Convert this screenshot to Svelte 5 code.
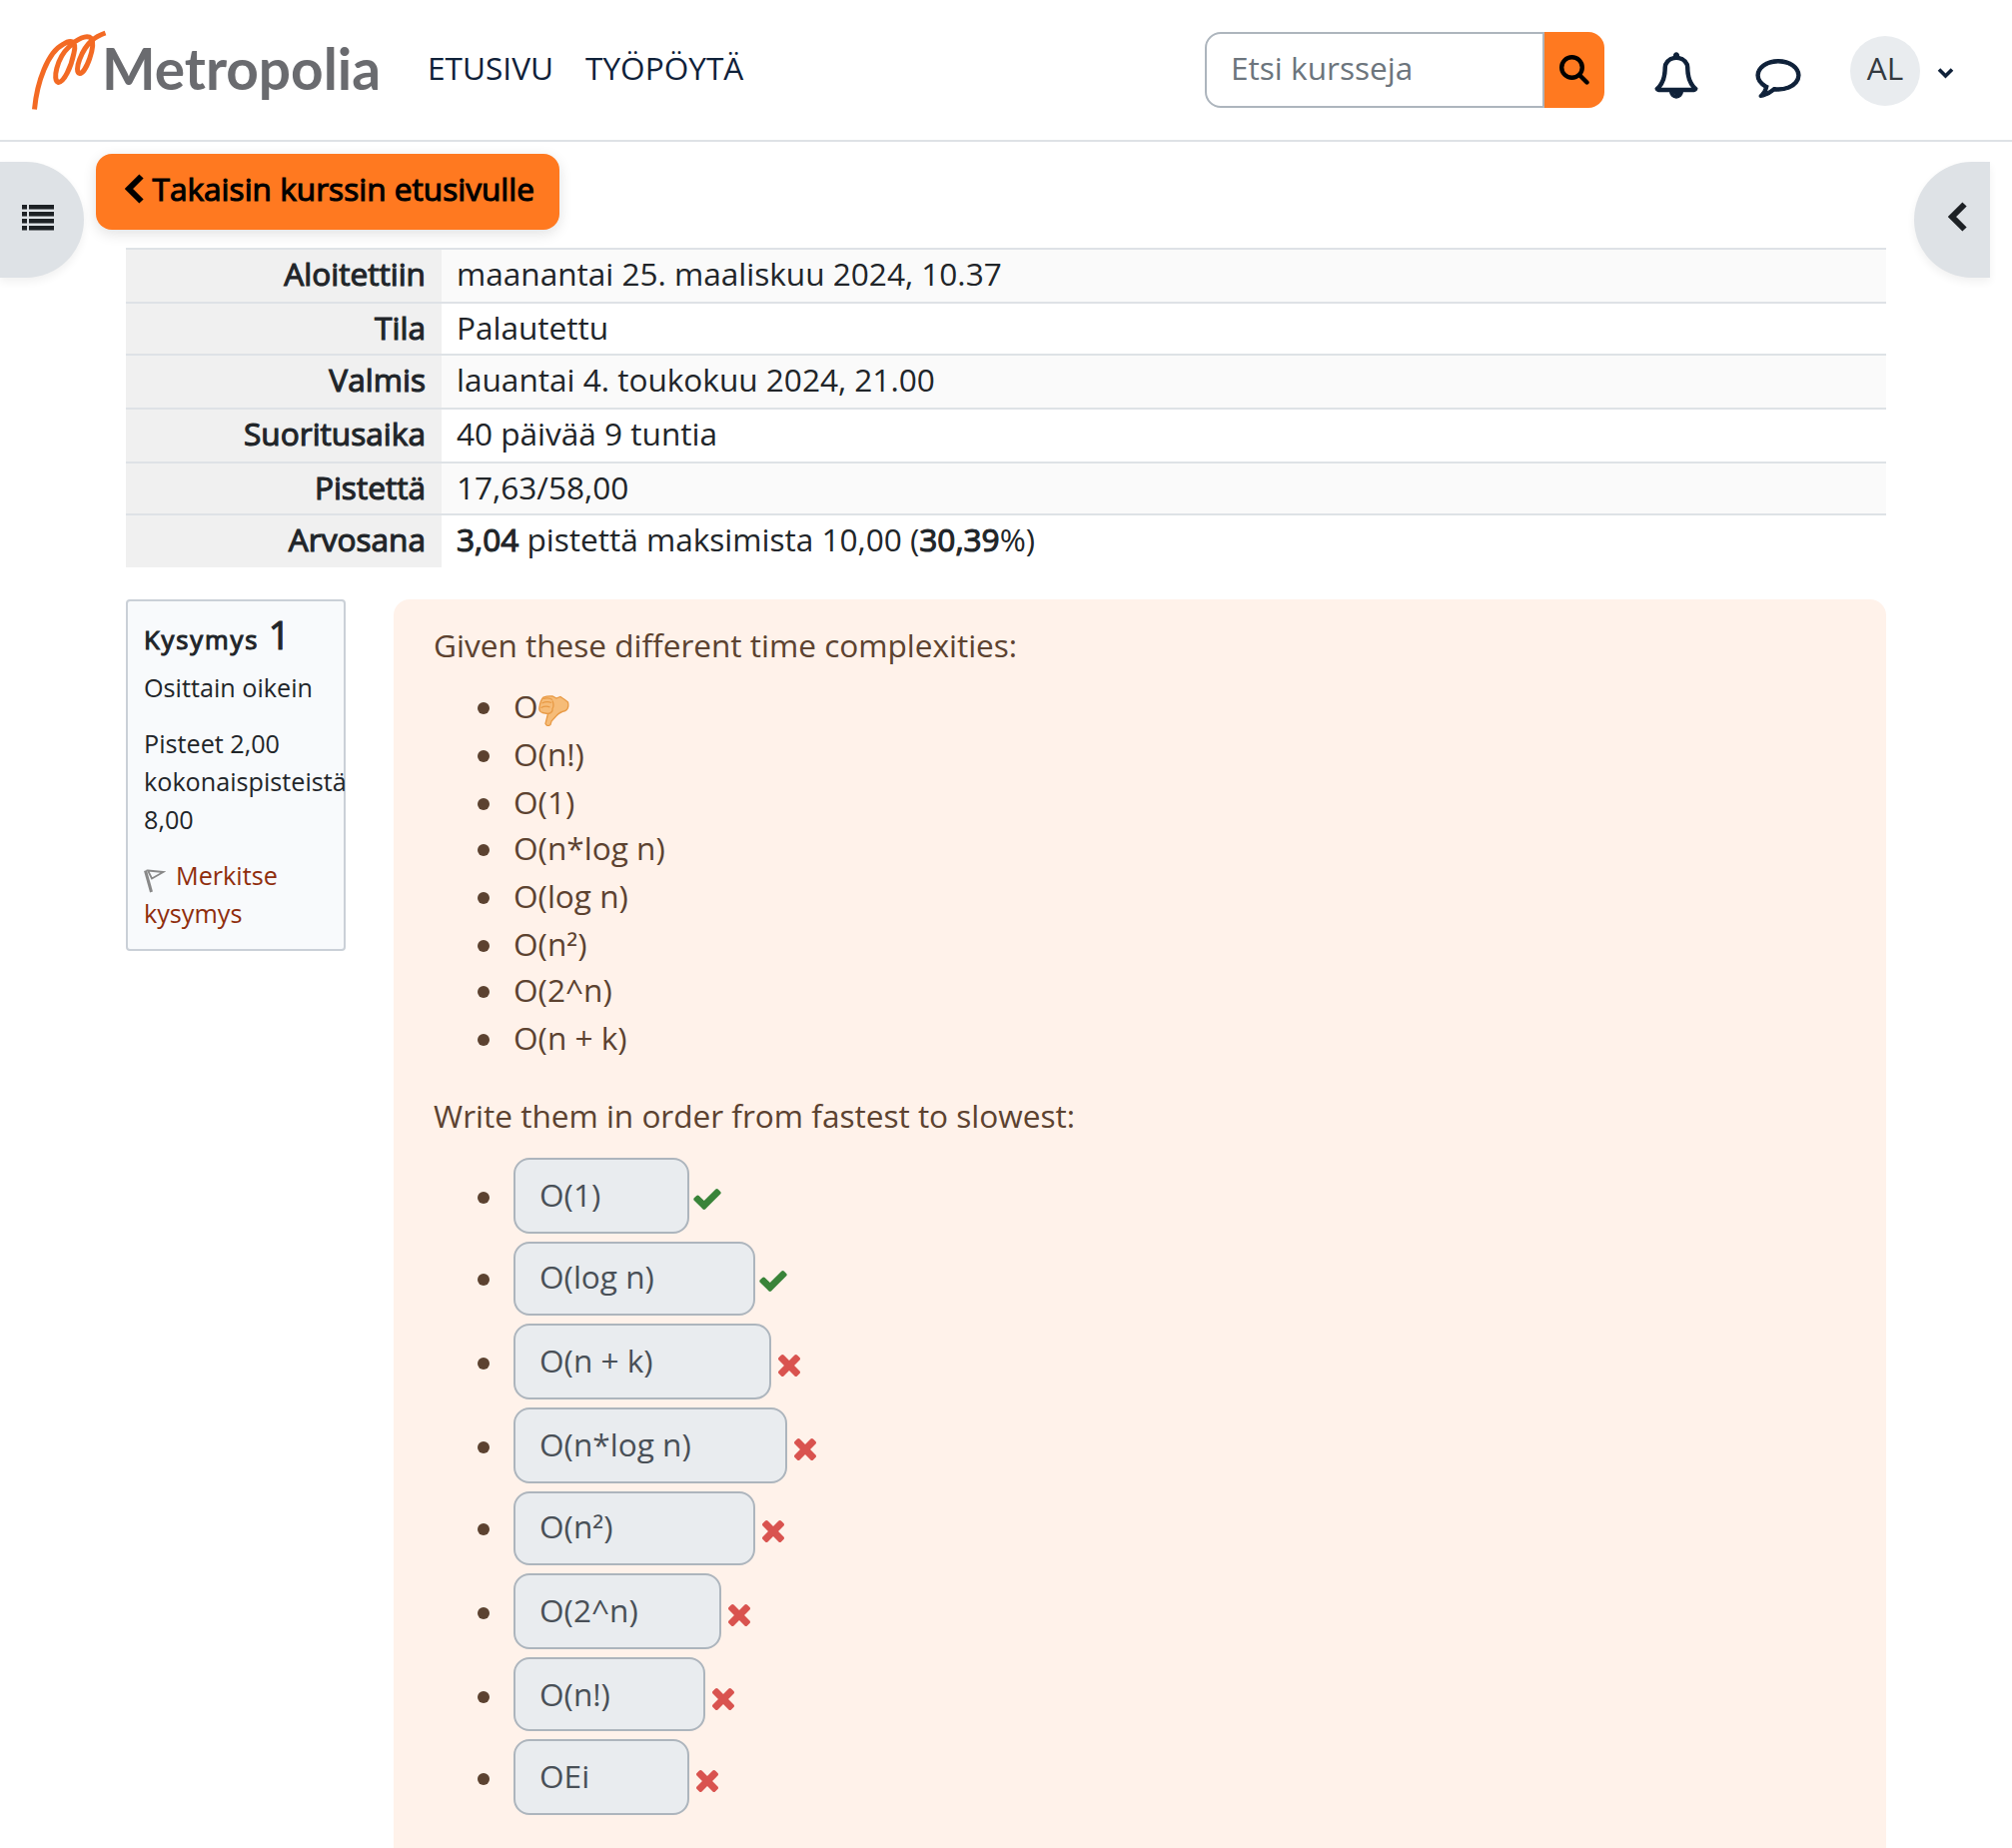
<script>
  const summary = [
    ['Aloitettiin', 'maanantai 25. maaliskuu 2024, 10.37'],
    ['Tila', 'Palautettu'],
    ['Valmis', 'lauantai 4. toukokuu 2024, 21.00'],
    ['Suoritusaika', '40 päivää 9 tuntia'],
    ['Pistettä', '17,63/58,00'],
  ];
  const options = ['O(n!)', 'O(1)', 'O(n*log n)', 'O(log n)', 'O(n²)', 'O(2^n)', 'O(n + k)'];
  const answers = [
    { value: 'O(1)', width: 176, ok: true },
    { value: 'O(log n)', width: 242, ok: true },
    { value: 'O(n + k)', width: 258, ok: false },
    { value: 'O(n*log n)', width: 274, ok: false },
    { value: 'O(n²)', width: 242, ok: false },
    { value: 'O(2^n)', width: 208, ok: false },
    { value: 'O(n!)', width: 192, ok: false },
    { value: 'OEi', width: 176, ok: false },
  ];
</script>

{#snippet formula(text)}<span>{#each text.split(/(²)/) as part}{#if part === '²'}<span class="square">²</span>{:else}{part}{/if}{/each}</span>{/snippet}

<div class="page">
  <header>
    <svg class="logo" width="360" height="100" viewBox="0 0 360 100" aria-label="Metropolia">
      <path d="M14.500 89.500C17 62 28 32 43 24.500C51 19 57 21 54 33C51 48 44 62 38.500 62.500C32 61 37 38 49 27C57 19 67 14 71.500 18.500C76 26 66 53 60 53.500C53 52 62 29 72 20.500Q77 16 85.500 13" />
      <text x="82" y="70" textLength="279" lengthAdjust="spacingAndGlyphs">Metropolia</text>
    </svg>
    <nav><a href="#top">ETUSIVU</a><a href="#top">TYÖPÖYTÄ</a></nav>
    <div class="search">
      <input placeholder="Etsi kursseja" />
      <button aria-label="Etsi">
        <svg width="30" height="30" viewBox="0 0 30 30"><circle cx="12.500" cy="12.500" r="10.300" /><path d="M20 20l7.500 7.500" /></svg>
      </button>
    </div>
    <svg class="bell" width="42" height="45" viewBox="0 0 1664 1792"><path d="M848 1696q0-16-16-16-59 0-101.500-42.500T688 1536q0-16-16-16t-16 16q0 73 51.500 124.500T832 1712q16 0 16-16zM182 1408h1300q-266-300-266-832 0-51-24-105t-69-103-121.500-80.500T832 256t-169.500 31.500T541 368t-69 103-24 105q0 532-266 832zm1482 0q0 52-38 90t-90 38h-448q0 106-75 181t-181 75-181-75-75-181H128q-52 0-90-38t-38-90q50-42 91-88t85-119.500 74.500-158.500 50-206T320 576q0-152 117-282.500T744 135q-8-19-8-39 0-40 28-68t68-28 68 28 28 68q0 20-8 39 190 28 307 158.500T1344 576q0 139 19.500 260t50 206 74.500 158.500 85 119.500 91 88z" /></svg>
    <svg class="comment" width="44" height="39" viewBox="0 0 1792 1536"><path d="M896 128q-204 0-381.500 69.500T232 385 128 640q0 112 71.500 213.500T401 1029l87 50-27 96q-24 91-70 172 152-63 275-171l43-38 57 6q69 8 130 8 204 0 381.500-69.500T1560 895t104-255-104-255-282.500-187.500T896 128zm896 512q0 174-120 321.500t-326 233-450 85.500q-70 0-145-8-198 175-460 242-49 14-114 22h-5q-15 0-27-10.500t-16-27.500v-1q-3-4-.5-12t2-10 4.500-9.500l6-9 7-8.500 8-9q7-8 31-34.500t34.500-38 31-39.500 32.500-51 27-59 26-76q-157-89-247.500-220T0 640q0-130 71-248.500t191-204.500T548 50.500 896 0t348 50.500T1530 187t191 204.500 71 248.500z" /></svg>
    <span class="avatar">AL</span>
    <svg class="caret" width="17" height="11" viewBox="0 0 17 11"><path d="M2 1.500l6.500 6.500L15 1.500" /></svg>
  </header>

  <div class="drawer left">
    <svg width="33" height="26" viewBox="0 0 33 26"><path d="M0 0h5v4.500H0zM7 0h25v4.500H7zM0 7h5v4.500H0zM7 7h25v4.500H7zM0 14h5v4.500H0zM7 14h25v4.500H7zM0 21h5v4.500H0zM7 21h25v4.500H7z" /></svg>
  </div>
  <div class="drawer right">
    <svg width="20" height="30" viewBox="0 0 20 30"><path d="M16.500 2.500L4 15l12.500 12.500" /></svg>
  </div>

  <main>
    <a class="back" href="#top"><svg width="20" height="30" viewBox="0 0 20 30"><path d="M16.500 2.500L4 15l12.500 12.500" /></svg><b>Takaisin kurssin etusivulle</b></a>

    <div class="summary">
      {#each summary as [label, value]}
        <div class="row"><b class="th">{label}</b><span class="td">{value}</span></div>
      {/each}
      <div class="row"><b class="th">Arvosana</b><span class="td"><b>3,04</b> pistettä maksimista 10,00 (<b>30,39</b>%)</span></div>
    </div>

    <div class="question">
      <aside>
        <h3>Kysymys <span>1</span></h3>
        <p class="state">Osittain oikein</p>
        <p>Pisteet 2,00 kokonaispisteistä 8,00</p>
        <p class="flag"><svg width="22" height="24" viewBox="0 0 22 24"><path class="pole" d="M1.500 1.500L7.500 23" /><path d="M4 1.500L19.500 3L8 9.500z" /></svg>Merkitse kysymys</p>
      </aside>
      <section>
        <p class="lead">Given these different time complexities:</p>
        <ul class="options">
          <li>O<svg class="thumb" width="31" height="31" viewBox="0 0 31 31"><path class="hand" d="M5 2Q9 .5 14 1L18 3L22 1.500Q26 4 29.500 7Q31 13 27 15.500Q21 17 18 20.500L13 26L12 29.500Q9 32 7 28.500L9.500 18.500L4 17.500Q0 16 1 12Q2 5 5 2z" /><path class="crease" d="M5 3.500q5-1.500 9 1M3.500 8q5-2.500 9.500-.5M2.500 12.500q5-2.500 9-.5M9.500 18.500q5-1 4.500-5q2-3 0-8" /></svg></li>
          {#each options as o}<li>{@render formula(o)}</li>{/each}
        </ul>
        <p class="order">Write them in order from fastest to slowest:</p>
        <ul class="answers">
          {#each answers as a}
            <li>
              <span class="field" style:width="{a.width}px">{@render formula(a.value)}</span>
              {#if a.ok}
                <svg class="ok" width="28" height="21" viewBox="0 0 1550 1188"><path d="M1550 232q0 40-28 68L798 1024l-136 136q-28 28-68 28t-68-28l-136-136L28 662Q0 634 0 594t28-68l136-136q28-28 68-28t68 28l294 295L1250 28q28-28 68-28t68 28l136 136q28 28 28 68z" /></svg>
              {:else}
                <svg class="bad" width="22" height="22" viewBox="0 0 1188 1188"><path d="M1188 956q0 40-28 68l-136 136q-28 28-68 28t-68-28L594 866l-294 294q-28 28-68 28t-68-28L28 1024Q0 996 0 956t28-68l294-294L28 300Q0 272 0 232t28-68L164 28q28-28 68-28t68 28l294 294L888 28q28-28 68-28t68 28l136 136q28 28 28 68t-28 68L866 594l294 294q28 28 28 68z" /></svg>
              {/if}
            </li>
          {/each}
        </ul>
      </section>
    </div>
  </main>
</div>

<style>
  :global(body) { margin: 0; background: #fff; }
  .page { position: relative; width: 2014px; height: 1850px; overflow: hidden; box-sizing: border-box; font: 31.6px/47.4px "Open Sans", sans-serif; color: #212529; }
  .page * { box-sizing: border-box; }
  p, ul, h3 { margin: 0; padding: 0; }
  a { color: inherit; text-decoration: none; }
  b { font-weight: 400; -webkit-text-stroke: 1.1px currentColor; }
  header { height: 142px; border-bottom: 2px solid #dee2e6; display: flex; align-items: flex-start; color: #0f2139; }
  .logo { margin: 20px 0 0 20px; overflow: visible; }
  .logo path { fill: none; stroke: #f36a24; stroke-width: 5; }
  .logo text { font: 700 56.500px Lato, sans-serif; fill: #6a6b6f; }
  nav { display: flex; gap: 32px; margin: 44px 0 0 48px; }
  .search { display: flex; margin: 32px 0 0 auto; width: 400px; height: 76px; }
  .search input { width: 340px; border: 2px solid #adb5bd; border-radius: 16px 0 0 16px; padding: 0 0 4px 24px; font: inherit; outline: 0; background: #fff; }
  .search input::placeholder { color: #6c757d; opacity: 1; }
  .search button { width: 60px; padding: 0; border: 0; background: #ff7920; border-radius: 0 16px 16px 0; display: flex; align-items: center; justify-content: center; }
  .search svg { fill: none; stroke: #000; stroke-width: 4.400; stroke-linecap: round; }
  .bell { margin: 53px 0 0 50.500px; fill: #0f2139; stroke: #0f2139; stroke-width: 50; overflow: visible; }
  .comment { margin: 58.500px 0 0 59.500px; fill: #0f2139; stroke: #0f2139; stroke-width: 50; overflow: visible; }
  .avatar { margin: 36px 0 0 50px; width: 70px; height: 70px; border-radius: 50%; background: #e9ecef; color: #343a40; text-align: center; line-height: 63.500px; }
  .caret { margin: 68px 58px 0 17px; fill: none; stroke: #0f2139; stroke-width: 3.600; }
  .drawer { position: absolute; top: 162px; height: 116px; background: #dee2e6; box-shadow: 0 4px 8px rgba(0, 0, 0, .06); }
  .drawer.left { left: 0; width: 84px; border-radius: 0 58px 58px 0; padding: 43px 0 0 22px; }
  .drawer.left svg { display: block; fill: #1d2125; }
  .drawer.right { right: 22px; width: 76px; border-radius: 58px 0 0 58px; padding: 40px 0 0 34px; }
  .drawer.right svg, .back svg { display: block; fill: none; stroke: #1d2125; stroke-width: 6; }
  main { padding: 12px 126px 0; }
  .back { display: flex; width: 464px; height: 76px; margin-left: -30px; border-radius: 16px; background: #ff7920; color: #000; padding: 11px 0 0 29px; box-shadow: 0 4px 14px rgba(0, 0, 0, .12); }
  .back svg { stroke: #000; margin: 9px 7.500px 0 0; }
  .summary { margin-top: 18px; }
  .row { display: flex; height: 54px; border-top: 2px solid #dee2e6; }
  .row:nth-child(3n + 2) { height: 52px; }
  .row:nth-child(odd) { background: #fafafa; }
  .row:last-child { background: #fff; }
  .th { width: 316px; background: #f0f0f0; text-align: right; padding-right: 16px; }
  .td { padding-left: 15px; letter-spacing: -.02px; }
  .question { display: flex; justify-content: space-between; align-items: flex-start; margin-top: 32px; }
  aside { width: 220px; height: 352px; border: 2px solid #cad0d7; border-radius: 4px; background: #f8fafc; padding: 9px 0 0 16px; font-size: 25.200px; line-height: 38px; }
  aside h3 { font-size: 25.600px; font-weight: 400; line-height: 48px; letter-spacing: 1.850px; -webkit-text-stroke: 1.1px currentColor; white-space: nowrap; }
  aside h3 span { font-size: 38px; margin-left: 1px; }
  .state { margin: 4px 0 18px; }
  .flag { margin-top: 18px; color: #8f2d0c; width: 170px; }
  .flag svg { fill: none; stroke: #888; stroke-width: 1.800; vertical-align: -8px; margin-right: 10px; }
  .flag .pole { stroke-width: 3; }
  section { width: 1494px; height: 1270px; border-radius: 16px; background: #fff2ea; color: #5c4230; padding: 22px 40px 0; }
  .lead, .order { letter-spacing: -.02px; }
  ul { padding-left: 80px; list-style: none; }
  li { display: flex; align-items: flex-start; white-space: nowrap; }
  li::before { content: ""; flex: none; width: 12px; height: 12px; margin: 20px 24px 0 -36px; border-radius: 50%; background: #5c4230; }
  .options { margin-top: 14px; }
  .options li { height: 48px; }
  .options li:nth-child(3n) { height: 46px; }
  .square { display: inline-block; line-height: 0; transform: translateY(3px); }
  .thumb { margin-top: 13px; fill: #f6bc78; stroke: #e89a45; stroke-width: 1.300; }
  .crease { fill: none; }
  .order { margin-top: 30px; }
  .answers { margin-top: 18.600px; }
  .answers li { height: 84px; }
  .answers li::before { margin-top: 34px; }
  .answers li svg { margin-top: 30.500px; }
  .field { height: 76px; border: 2px solid #adb5bd; border-radius: 16px; background: #e9ecef; color: #495057; padding-left: 24px; line-height: 70.500px; }
  .answers li:nth-child(3n + 2) { height: 82px; }
  .answers li:nth-child(3n + 2)::before { margin-top: 32px; }
  .answers li:nth-child(3n + 2) .field { height: 74px; line-height: 66.500px; }
  .answers li:nth-child(3n + 2) svg { margin-top: 28.500px; }
  .answers li:nth-child(7) { height: 82px; }
  .answers li:nth-child(7) .field { height: 74px; }
  .answers li:last-child { height: 84px; }
  .answers li:last-child::before { margin-top: 34px; }
  .answers li:last-child .field { height: 76px; line-height: 70.500px; }
  .answers li:last-child svg { margin-top: 30.500px; }
  .answers .ok { fill: #398439; margin-left: 4px; }
  .answers .bad { fill: #d9534f; margin-left: 7px; }
</style>
